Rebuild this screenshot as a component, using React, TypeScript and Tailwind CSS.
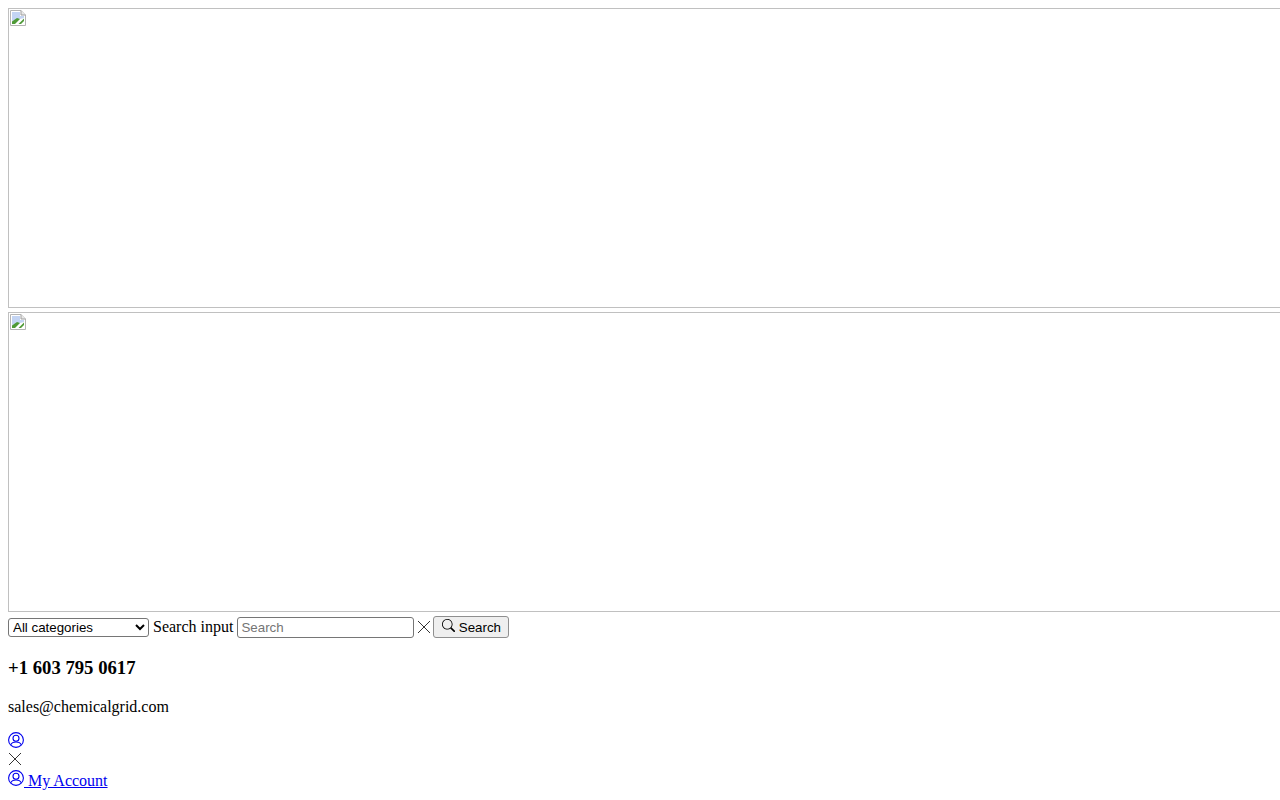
import React from "react";
import { BsSearch } from "react-icons/bs";

function BrokenImage() {
  return (
    <svg width="16" height="16" viewBox="0 0 16 16" className="absolute left-px top-px">
      <path d="M0.5 0.5H11L15.5 5V15.5H0.5Z" fill="#fff" stroke="#b4b4b4" />
      <path d="M11 0.5V5H15.5" fill="#e8e8e8" stroke="#a0a0a0" />
      <path d="M2 2H10V6H14V8L2 11Z" fill="#c3d4f3" />
      <path d="M2 14V11.5L7 8L10 9L5 14H2Z" fill="#4f9a37" />
      <path d="M8.5 14L14 8.5V11L11 14Z" fill="#4f9a37" />
    </svg>
  );
}

function ImageBox() {
  return (
    <div className="relative w-[1400px] h-[300px] border border-[#c0c0c0]">
      <BrokenImage />
    </div>
  );
}

function UserIcon() {
  return (
    <svg width="16" height="16" viewBox="0 0 16 16" fill="none" stroke="currentColor" strokeWidth="1.1" className="inline-block align-baseline">
      <circle cx="8" cy="8" r="7.4" />
      <circle cx="8" cy="6.2" r="3" />
      <path d="M3 12.6C3.6 10.8 5.2 10 8 10C10.8 10 12.4 10.8 13 12.6" />
    </svg>
  );
}

function CloseIcon() {
  return (
    <svg width="14" height="14" viewBox="0 0 14 14" fill="none" stroke="currentColor" strokeWidth="0.8" className="shrink-0">
      <path d="M1 1L13 13M13 1L1 13" />
    </svg>
  );
}

export default function App() {
  return (
    <div className="h-[800px] overflow-hidden p-2 bg-white text-black text-base leading-[normal] font-['Liberation_Serif',serif]">
      <div className="flex flex-col gap-1">
        <ImageBox />
        <ImageBox />
      </div>

      <form className="mt-1 flex items-center gap-1 h-[22px]">
        <select className="w-[141px] h-[19px] appearance-auto border border-[#767676] rounded-[3px] text-[13.33px] font-['Liberation_Sans',sans-serif]">
          <option>All categories</option>
        </select>
        <label>Search input</label>
        <input
          placeholder="Search"
          className="w-[177px] h-[21px] px-[3px] border border-[#767676] rounded-[3px] text-[13.33px] font-['Liberation_Sans',sans-serif] placeholder:text-[#757575]"
        />
        <div className="-ml-px">
          <CloseIcon />
        </div>
        <button
          type="button"
          className="-ml-[2px] h-[22px] w-[76px] flex items-center justify-center gap-1 bg-[#efefef] border border-[#8f8f8f] rounded-[3px] text-[13.33px] font-['Liberation_Sans',sans-serif]"
        >
          <BsSearch size={13} className="-mt-[3px]" />
          Search
        </button>
      </form>

      <h3 className="mt-[19px] text-[18.72px] font-bold">+1 603 795 0617</h3>
      <p className="mt-[19px]">sales@chemicalgrid.com</p>

      <div className="mt-4 flex flex-col text-[#0000ee]">
        <a href="#" className="h-5 underline">
          <UserIcon />
        </a>
        <div className="h-[18px] text-black">
          <CloseIcon />
        </div>
        <a href="#" className="underline">
          <UserIcon /> My Account
        </a>
      </div>
    </div>
  );
}
